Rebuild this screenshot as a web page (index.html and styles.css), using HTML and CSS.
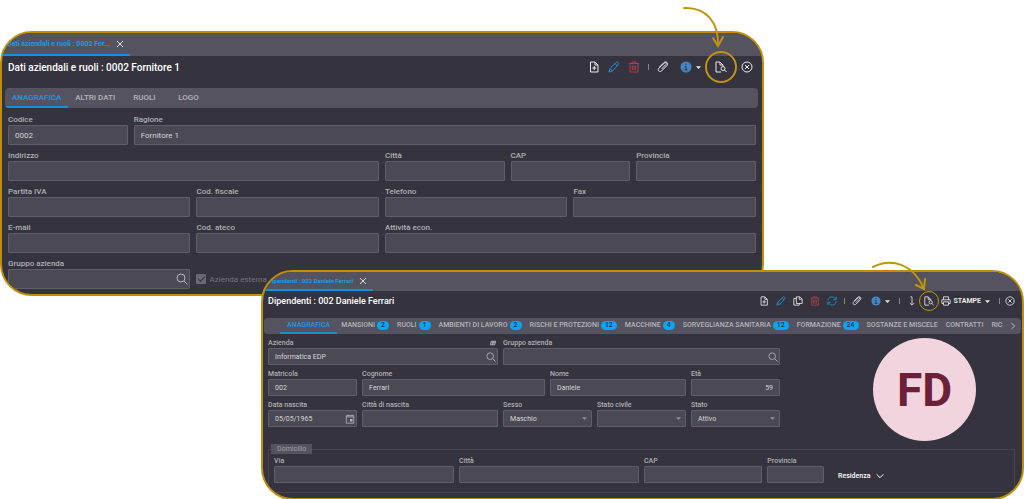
FILE: index.html
```html
<!DOCTYPE html>
<html lang="it">
<head>
  <meta charset="UTF-8">
  <title>Dati aziendali e dipendenti</title>
  <meta name="viewport" content="width=device-width, initial-scale=1.0">
  <link rel="stylesheet" href="styles.css">
</head>
<body>
  <!-- Icon sprite -->
  <svg class="sprite" aria-hidden="true">
    <symbol id="i-new" viewBox="0 0 24 24"><path d="M5 2h9l6 6v14H5zM14 2v6h6M12.500 10v8M8.500 14h8"/></symbol>
    <symbol id="i-edit" viewBox="0 0 24 24"><path d="M2 22l2-7L16 3c1.500-1.500 3-1.500 4.500 0s1.500 3 0 4.500L9 20zM14 5l5 5M4 15l5 5"/></symbol>
    <symbol id="i-trash" viewBox="0 0 24 24"><path d="M2 5h20M8 5V2h8v3M4 5v17h16V5M8.500 9v9M12 9v9M15.500 9v9"/></symbol>
    <symbol id="i-clip" viewBox="0 0 24 24"><path d="M9 16L18 7c2-3-1-5-3-3L4 14c-4 5 1 9 5 6L20 9c4-5-2-9-6-6L5 12"/></symbol>
    <symbol id="i-info" viewBox="0 0 24 24"><circle class="dot" cx="12" cy="12" r="11"/><path class="cut" d="M12 5v3M9.500 11H12v7M9 18h6"/></symbol>
    <symbol id="i-caret" viewBox="0 0 10 10"><path class="solid" d="M0 2.500h10L5 8z"/></symbol>
    <symbol id="i-find" viewBox="0 0 24 24"><path d="M12 22H2V2h8l6 6v2M10 2v6h6"/><circle cx="16" cy="15" r="4"/><path d="M19 18l4 4"/></symbol>
    <symbol id="i-close" viewBox="0 0 24 24"><circle cx="12" cy="12" r="10"/><path d="M8 8l8 8M16 8l-8 8"/></symbol>
    <symbol id="i-x" viewBox="0 0 24 24"><path d="M3 3l18 18M21 3L3 21"/></symbol>
    <symbol id="i-search" viewBox="0 0 24 24"><circle cx="10" cy="10" r="8"/><path d="M16 16l7 7"/></symbol>
    <symbol id="i-copy" viewBox="0 0 24 24"><path d="M8 2h8l6 5v11H8zM15 2v6h6M8 6H2v16h13v-4"/></symbol>
    <symbol id="i-refresh" viewBox="0 0 24 24"><path d="M2 11C3 1 15-1 20 7M22 2v7h-7M22 13c-1 10-13 12-18 4M2 22v-7h7"/></symbol>
    <symbol id="i-down" viewBox="0 0 24 24"><path d="M8 2h4v19M7 17l5 5 5-5"/></symbol>
    <symbol id="i-print" viewBox="0 0 24 24"><path d="M6 9V2h12v7M6 18H2V9h20v9h-4M6 14h12v8H6z"/></symbol>
    <symbol id="i-calendar" viewBox="0 0 24 24"><path d="M3 4h18v18H3zM3 7h18M7 1v4M17 1v4"/><path class="solid" d="M12 12h6v6h-6z"/></symbol>
    <symbol id="i-right" viewBox="0 0 24 24"><path d="M7 3l10 9-10 9"/></symbol>
    <symbol id="i-expand" viewBox="0 0 24 24"><path d="M2 7l10 10L22 7"/></symbol>
    <symbol id="i-map" viewBox="0 0 24 24"><path d="M5 5h17l-3 14H2zM13 6l-3 13M6 11h14"/></symbol>
  </svg>

  <main class="stage">
    <!-- Company -->
    <section class="frame frame-company">
      <div class="window">
        <div class="window-tabs">
          <div class="window-tab">
            <span>Dati aziendali e ruoli : 0002 For...</span>
            <button type="button" aria-label="Chiudi scheda"><svg class="icon"><use href="#i-x"/></svg></button>
          </div>
        </div>
        <header class="window-header">
          <h1>Dati aziendali e ruoli : 0002 Fornitore 1</h1>
          <div class="toolbar">
            <div class="group">
              <button type="button" aria-label="Nuovo"><svg class="icon"><use href="#i-new"/></svg></button>
              <button type="button" class="blue" aria-label="Modifica"><svg class="icon"><use href="#i-edit"/></svg></button>
              <button type="button" class="red" aria-label="Elimina"><svg class="icon"><use href="#i-trash"/></svg></button>
              <span class="sep"></span>
              <button type="button" aria-label="Allegati"><svg class="icon"><use href="#i-clip"/></svg></button>
            </div>
            <button type="button" class="info" aria-label="Informazioni"><svg class="icon"><use href="#i-info"/></svg><svg class="caret"><use href="#i-caret"/></svg></button>
            <button type="button" class="ring" aria-label="Ricerca documento"><svg class="icon"><use href="#i-find"/></svg></button>
            <button type="button" aria-label="Chiudi"><svg class="icon"><use href="#i-close"/></svg></button>
          </div>
        </header>
        <nav class="tabs">
          <a href="#" class="active">ANAGRAFICA</a>
          <a href="#">ALTRI DATI</a>
          <a href="#">RUOLI</a>
          <a href="#">LOGO</a>
        </nav>
        <form class="fields" autocomplete="off">
          <div class="field s2"><label for="codice">Codice</label><input id="codice" type="text" value="0002"></div>
          <div class="field s10"><label for="ragione">Ragione</label><input id="ragione" type="text" value="Fornitore 1"></div>
          <div class="field s6"><label for="indirizzo">Indirizzo</label><input id="indirizzo" type="text"></div>
          <div class="field s2"><label for="citta">Città</label><input id="citta" type="text"></div>
          <div class="field s2"><label for="cap">CAP</label><input id="cap" type="text"></div>
          <div class="field s2"><label for="provincia">Provincia</label><input id="provincia" type="text"></div>
          <div class="field s3"><label for="piva">Partita IVA</label><input id="piva" type="text"></div>
          <div class="field s3"><label for="cf">Cod. fiscale</label><input id="cf" type="text"></div>
          <div class="field s3"><label for="tel">Telefono</label><input id="tel" type="text"></div>
          <div class="field s3"><label for="fax">Fax</label><input id="fax" type="text"></div>
          <div class="field s3"><label for="email">E-mail</label><input id="email" type="text"></div>
          <div class="field s3"><label for="ateco">Cod. ateco</label><input id="ateco" type="text"></div>
          <div class="field s6"><label for="attivita">Attività econ.</label><input id="attivita" type="text"></div>
          <div class="field s3">
            <label for="gruppo">Gruppo azienda</label>
            <div class="control"><input id="gruppo" type="text"><svg class="icon"><use href="#i-search"/></svg></div>
          </div>
          <div class="check s3"><input id="esterna" type="checkbox" checked disabled><label for="esterna">Azienda esterna</label></div>
        </form>
      </div>
      <svg class="arrow" viewBox="0 0 44 44"><path d="M2 3c22-1 35 14 34 38M31 33l5 8 5-9"/></svg>
    </section>

    <!-- Employee -->
    <section class="frame frame-employee">
      <div class="window">
        <div class="window-tabs">
          <div class="window-tab">
            <span>Dipendenti : 002 Daniele Ferrari</span>
            <button type="button" aria-label="Chiudi scheda"><svg class="icon"><use href="#i-x"/></svg></button>
          </div>
        </div>
        <header class="window-header">
          <h1>Dipendenti : 002 Daniele Ferrari</h1>
          <div class="toolbar">
            <div class="group">
              <button type="button" aria-label="Nuovo"><svg class="icon"><use href="#i-new"/></svg></button>
              <button type="button" class="blue" aria-label="Modifica"><svg class="icon"><use href="#i-edit"/></svg></button>
              <button type="button" aria-label="Copia"><svg class="icon"><use href="#i-copy"/></svg></button>
              <button type="button" class="red" aria-label="Elimina"><svg class="icon"><use href="#i-trash"/></svg></button>
              <button type="button" class="blue" aria-label="Aggiorna"><svg class="icon"><use href="#i-refresh"/></svg></button>
              <span class="sep"></span>
              <button type="button" aria-label="Allegati"><svg class="icon"><use href="#i-clip"/></svg></button>
            </div>
            <button type="button" class="info" aria-label="Informazioni"><svg class="icon"><use href="#i-info"/></svg><svg class="caret"><use href="#i-caret"/></svg></button>
            <div class="group">
              <span class="sep"></span>
              <button type="button" aria-label="Scarica"><svg class="icon"><use href="#i-down"/></svg></button>
              <button type="button" class="ring" aria-label="Ricerca documento"><svg class="icon"><use href="#i-find"/></svg></button>
              <button type="button" class="print"><svg class="icon"><use href="#i-print"/></svg>STAMPE<svg class="caret"><use href="#i-caret"/></svg></button>
            </div>
            <div class="group group-end">
              <span class="sep"></span>
              <button type="button" aria-label="Chiudi"><svg class="icon"><use href="#i-close"/></svg></button>
            </div>
          </div>
        </header>
        <nav class="tabs">
          <div class="tabs-scroll">
            <a href="#" class="active">ANAGRAFICA</a>
            <a href="#">MANSIONI <b>2</b></a>
            <a href="#">RUOLI <b>1</b></a>
            <a href="#">AMBIENTI DI LAVORO <b>2</b></a>
            <a href="#">RISCHI E PROTEZIONI <b>12</b></a>
            <a href="#">MACCHINE <b>4</b></a>
            <a href="#">SORVEGLIANZA SANITARIA <b>12</b></a>
            <a href="#">FORMAZIONE <b>24</b></a>
            <a href="#">SOSTANZE E MISCELE</a>
            <a href="#">CONTRATTI</a>
            <a href="#">RIC</a>
          </div>
          <button type="button" aria-label="Avanti"><svg class="icon"><use href="#i-right"/></svg></button>
        </nav>
        <form autocomplete="off">
          <div class="profile">
            <div class="fields">
              <div class="field s5">
                <label for="azienda">Azienda</label>
                <div class="control"><input id="azienda" type="text" value="Informatica EDP"><svg class="icon"><use href="#i-search"/></svg><svg class="hint"><use href="#i-map"/></svg></div>
              </div>
              <div class="field s6">
                <label for="gruppo2">Gruppo azienda</label>
                <div class="control"><input id="gruppo2" type="text"><svg class="icon"><use href="#i-search"/></svg></div>
              </div>
              <div class="field s2"><label for="matricola">Matricola</label><input id="matricola" type="text" value="002"></div>
              <div class="field s4"><label for="cognome">Cognome</label><input id="cognome" type="text" value="Ferrari"></div>
              <div class="field s3"><label for="nome">Nome</label><input id="nome" type="text" value="Daniele"></div>
              <div class="field s2"><label for="eta">Età</label><input id="eta" class="number" type="text" value="59"></div>
              <div class="field s2">
                <label for="nascita">Data nascita</label>
                <div class="control"><input id="nascita" type="text" value="05/05/1965"><svg class="icon"><use href="#i-calendar"/></svg></div>
              </div>
              <div class="field s3"><label for="luogo">Città di nascita</label><input id="luogo" type="text"></div>
              <div class="field s2">
                <label for="sesso">Sesso</label>
                <div class="control"><select id="sesso"><option>Maschio</option><option>Femmina</option></select><svg class="caret"><use href="#i-caret"/></svg></div>
              </div>
              <div class="field s2">
                <label for="civile">Stato civile</label>
                <div class="control"><select id="civile"><option></option><option>Celibe</option></select><svg class="caret"><use href="#i-caret"/></svg></div>
              </div>
              <div class="field s2">
                <label for="stato">Stato</label>
                <div class="control"><select id="stato"><option>Attivo</option><option>Cessato</option></select><svg class="caret"><use href="#i-caret"/></svg></div>
              </div>
            </div>
            <div class="avatar">FD</div>
          </div>
          <fieldset>
            <legend>Domicilio</legend>
            <div class="fields">
              <div class="field s3"><label for="via">Via</label><input id="via" type="text"></div>
              <div class="field s3"><label for="citta2">Città</label><input id="citta2" type="text"></div>
              <div class="field s2"><label for="cap2">CAP</label><input id="cap2" type="text"></div>
              <div class="field s1"><label for="prov2">Provincia</label><input id="prov2" type="text"></div>
              <button type="button" class="more s3">Residenza <svg class="icon"><use href="#i-expand"/></svg></button>
            </div>
          </fieldset>
        </form>
      </div>
      <svg class="arrow" viewBox="0 0 56 32"><path d="M2 7c18-9 40-4 51 22M45 25l8 4 1-10"/></svg>
    </section>
  </main>
</body>
</html>
```
FILE: styles.css
```css
* {
  box-sizing: border-box;
}
body {
  margin: 0;
  background: #fff;
  font-family: Roboto, sans-serif;
  color: #e8e8ea;
}
button {
  display: flex;
  align-items: center;
  padding: 0;
  border: none;
  background: none;
  color: inherit;
  font: inherit;
  cursor: pointer;
}
a {
  color: inherit;
  text-decoration: none;
}
.sprite {
  display: none;
}
svg {
  display: block;
  flex: none;
  fill: none;
  stroke: currentColor;
  stroke-width: 2;
}
.solid, .dot {
  fill: currentColor;
  stroke: none;
}
.cut {
  stroke: #35343e;
}

/* Overlapping windows */
.stage {
  padding-top: 31px;
}
.frame {
  position: relative;
}
.frame-company {
  --tab: 7px;
  --label: 8px;
  --label-line: 11px;
  --input: 20px;
  --gap: 6px;
  --icon: 12px;
  --bar: 21px;
  width: 74.6%;
}
.frame-employee {
  --tab: 6px;
  --label: 7px;
  --label-line: 10px;
  --input: 17px;
  --gap: 5px;
  --icon: 10px;
  --bar: 17px;
  margin-top: -26px;
  margin-left: 25.5%;
}
.window {
  overflow: hidden;
  border: 2px solid #bd8f10;
  border-radius: 32px;
  background: #35343e;
  font-size: var(--label);
}
.icon {
  width: var(--icon);
  height: var(--icon);
}
.caret {
  width: 5px;
  height: 5px;
}

/* Title bar */
.window-tabs {
  display: flex;
  background: #54535f;
}
.window-tab {
  display: flex;
  align-items: center;
  gap: 6px;
  height: calc(var(--bar) + 2px);
  padding: 0 6px 0 5px;
  border-bottom: 2px solid #1a8fd0;
  color: #1a9be6;
  font-size: var(--tab);
  font-weight: 700;
}
.window-tab .icon {
  width: 8px;
  height: 8px;
  color: #dcdce0;
  stroke-width: 3;
}
.window-header {
  display: flex;
  align-items: center;
  justify-content: space-between;
  height: 22px;
  padding: 0 9px 0 6px;
}
h1 {
  margin: 0;
  color: #fff;
  font-size: 10px;
  font-weight: 500;
}
.frame-employee h1 {
  font-size: 9px;
}
.toolbar, .group {
  display: flex;
  align-items: center;
}
.frame-company .toolbar {
  gap: 14px;
}
.frame-company .group {
  gap: 8px;
  margin-right: -3px;
}
.frame-employee .toolbar {
  gap: 9px;
}
.frame-employee .group {
  gap: 7px;
}
.frame-employee .group-end {
  gap: 5px;
}
.frame-employee .window-header {
  height: 20px;
  padding: 0 7px 0 5px;
}
.sep {
  width: 1px;
  height: 6px;
  background: #85848d;
}
.blue {
  color: #1d96dc;
}
.red {
  color: #b63a4d;
}
.info {
  gap: 4px;
}
.info .icon {
  color: #4585c4;
}
.print {
  gap: 2px;
  font-weight: 700;
}
.print .caret {
  margin-left: 2px;
}
.ring {
  position: relative;
}
.ring::after {
  content: "";
  position: absolute;
  inset: -10px;
  border: 2px solid #c1940f;
  border-radius: 50%;
}
.frame-employee .ring::after {
  inset: -5px;
  border-width: 1px;
}

/* Section tabs */
.tabs {
  display: flex;
  margin: 10px 4px 0 3px;
  border-radius: 4px;
  overflow: hidden;
  background: #54535f;
  color: #b5b4bb;
  font-weight: 500;
}
.tabs a {
  display: flex;
  align-items: center;
  height: 20px;
  min-width: 45px;
  padding: 0 11px 0 7px;
  border-bottom: 2px solid transparent;
  white-space: nowrap;
}
.tabs .active {
  padding: 0 7px;
  border-color: #1a8fd0;
  color: #1a9be6;
}
.frame-employee .tabs {
  justify-content: space-between;
  margin: 7px 1px 0;
}
.tabs-scroll {
  display: flex;
  flex: 1;
  min-width: 0;
  margin: 0 4px 0 16px;
  overflow: hidden;
}
.tabs-scroll a {
  flex: none;
  gap: 2px;
  height: 16px;
  min-width: 0;
  padding: 0 4px;
}
.tabs b {
  padding: 0 4px;
  border-radius: 5px;
  background: #08a5f5;
  color: #25303d;
  font-weight: 500;
  line-height: 9px;
}
.tabs button {
  margin-right: 4px;
}
.tabs .icon {
  width: 8px;
  height: 8px;
  stroke-width: 3;
}

/* Fields */
.fields {
  display: grid;
  grid-template-columns: repeat(12, 1fr);
  gap: 5px var(--gap);
}
.frame-company .fields {
  padding: 6px 6px 5px;
}
.s1 { grid-column: span 1; }
.s2 { grid-column: span 2; }
.s3 { grid-column: span 3; }
.s4 { grid-column: span 4; }
.s5 { grid-column: span 5; }
.s6 { grid-column: span 6; }
.s10 { grid-column: span 10; }
.field {
  min-width: 0;
}
.field label {
  display: block;
  color: #b0afb5;
  font-weight: 500;
  line-height: var(--label-line);
  white-space: nowrap;
}
.field input, .field select {
  display: block;
  width: 100%;
  height: var(--input);
  padding: 0 6px;
  border: 1px solid #5e5d69;
  border-radius: 1px;
  background: #4a4954;
  color: #d6d6da;
  font: inherit;
  outline: none;
  appearance: none;
}
.field input:focus, .field select:focus {
  border-color: #1a8fd0;
}
.field .number {
  text-align: right;
}
.control {
  position: relative;
  color: #b5b4bb;
}
.control svg {
  position: absolute;
  top: 0;
  bottom: 0;
  right: 2px;
  margin: auto 0;
  pointer-events: none;
}
.control .caret {
  right: 5px;
  color: #8f8e98;
}
.control .hint {
  top: -8px;
  bottom: auto;
  width: 6px;
  height: 6px;
  stroke-width: 4;
}
.check {
  display: flex;
  align-items: center;
  gap: 3px;
  height: var(--input);
  align-self: end;
  color: #74737d;
}
.check input {
  width: 10px;
  height: 10px;
  margin: 0;
  border-radius: 1px;
  background: #6a6974;
  appearance: none;
}
.check input:checked::after {
  content: "";
  display: block;
  width: 6px;
  height: 3px;
  margin: 2px;
  border: solid #35343e;
  border-width: 0 0 1px 1px;
  transform: rotate(-45deg);
}

/* Employee profile */
.profile {
  display: grid;
  grid-template-columns: 512fr 230fr;
  gap: 5px;
  padding: 4px 7px 0 5px;
}
.profile .fields {
  grid-template-columns: repeat(11, 1fr);
  align-content: start;
  gap: 4px var(--gap);
}
.avatar {
  display: flex;
  align-items: center;
  justify-content: center;
  justify-self: end;
  width: 103px;
  height: 103px;
  margin-right: 39px;
  border-radius: 50%;
  background: #f2d4de;
  color: #6b1f38;
  font-size: 46px;
  font-weight: 700;
}
fieldset {
  min-width: 0;
  margin: 3px 7px 5px 5px;
  padding: 2px 5px 9px;
  border: 1px solid #45444f;
}
legend {
  margin-left: -3px;
  padding: 0 6px;
  background: #54535f;
  color: #a3a2aa;
  line-height: 10px;
}
.more {
  gap: 6px;
  align-self: end;
  height: 14px;
  padding-left: 9px;
  color: #fff;
  font-weight: 500;
}
.more .icon {
  width: 8px;
  height: 8px;
  stroke-width: 3;
}

/* Callout arrows */
.arrow {
  position: absolute;
  stroke: #c1940f;
  stroke-linecap: round;
}
.frame-company .arrow {
  top: -26px;
  right: 38px;
  width: 44px;
  height: 44px;
}
.frame-employee .arrow {
  top: -10px;
  right: 97px;
  width: 56px;
  height: 32px;
}
```
